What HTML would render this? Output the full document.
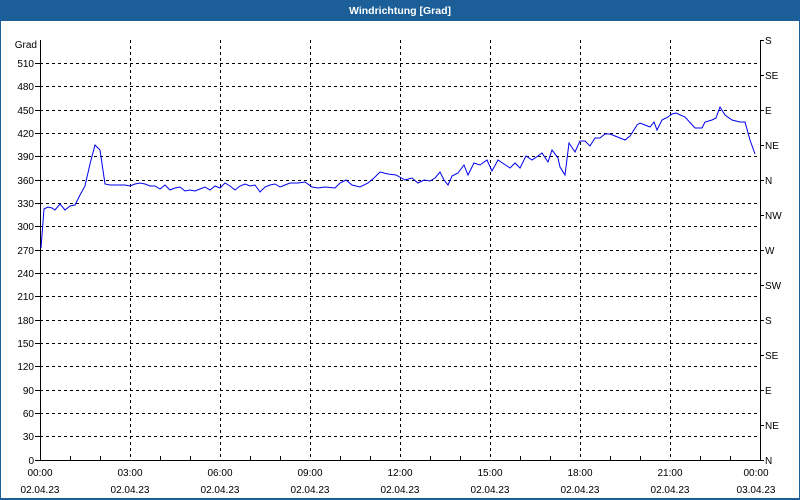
<!DOCTYPE html>
<html><head><meta charset="utf-8"><style>
html,body{margin:0;padding:0;width:800px;height:500px;overflow:hidden;background:#fff}
svg{display:block}
text{font-family:"Liberation Sans","DejaVu Sans",sans-serif;font-size:10px;fill:#000}
</style></head><body>
<svg width="800" height="500" xmlns="http://www.w3.org/2000/svg">
<rect x="0" y="0" width="800" height="500" fill="#1b5e98"/>
<rect x="1" y="21" width="798" height="477" fill="#fff"/>
<text x="400" y="14" text-anchor="middle" style="fill:#fff;font-weight:bold;font-size:10.5px">Windrichtung [Grad]</text>
<g stroke="#000" stroke-width="1" stroke-dasharray="3,3" shape-rendering="crispEdges">
<path d="M40 63.5H760M40 86.5H760M40 110.5H760M40 133.5H760M40 156.5H760M40 180.5H760M40 203.5H760M40 226.5H760M40 250.5H760M40 273.5H760M40 296.5H760M40 320.5H760M40 343.5H760M40 366.5H760M40 390.5H760M40 413.5H760M40 436.5H760"/>
<path d="M130.5 40V460M220.5 40V460M310.5 40V460M400.5 40V460M490.5 40V460M580.5 40V460M670.5 40V460"/>
</g>
<g stroke="#000" stroke-width="1" shape-rendering="crispEdges" fill="none">
<path d="M40.5 40V460.5H760.5V40"/>
<path d="M35 63.5h5M35 86.5h5M35 110.5h5M35 133.5h5M35 156.5h5M35 180.5h5M35 203.5h5M35 226.5h5M35 250.5h5M35 273.5h5M35 296.5h5M35 320.5h5M35 343.5h5M35 366.5h5M35 390.5h5M35 413.5h5M35 436.5h5M35 460.5h5"/>
<path d="M760 40.5h4M760 75.5h4M760 110.5h4M760 145.5h4M760 180.5h4M760 215.5h4M760 250.5h4M760 285.5h4M760 320.5h4M760 355.5h4M760 390.5h4M760 425.5h4M760 460.5h4"/>
<path d="M70.5 456v4M100.5 456v4M160.5 456v4M190.5 456v4M250.5 456v4M280.5 456v4M340.5 456v4M370.5 456v4M430.5 456v4M460.5 456v4M520.5 456v4M550.5 456v4M610.5 456v4M640.5 456v4M700.5 456v4M730.5 456v4"/>
</g>
<polyline fill="none" stroke="#0000ee" stroke-width="1" points="41,248 44,209 48,207 52,208 55,210 60,204 65,210 70,206 75,205 80,195 85,186 90,164 95,145 100,150 105,184 110,185 125,185 130,186 135,184 140,183 145,184 150,186 155,186 160,189 165,185 170,190 175,188 180,187 185,191 190,190 195,191 200,189 205,187 210,190 215,186 220,188 225,183 230,186 235,190 240,186 245,184 250,186 255,185 260,192 265,187 270,185 275,184 280,187 285,185 290,183 298,183 305,182 312,187 318,188 325,187 335,188 340,183 346,180 352,185 360,187 368,183 374,178 380,172 388,174 396,175 405,180 412,178 418,183 424,180 430,181 435,178 440,172 444,180 448,185 452,176 458,173 464,165 468,175 474,163 480,165 487,160 492,171 498,160 504,164 510,168 515,163 520,168 526,156 532,160 538,156 542,153 548,162 552,150 558,158 560,167 565,175 569,143 575,152 580,141 585,141 590,146 595,138 600,138 605,134 610,134 620,138 625,140 630,136 632,133 637,125 640,123 645,125 650,127 654,122 657,130 662,120 668,117 672,114 676,113 685,117 695,128 702,128 705,122 712,120 716,118 720,107 725,115 732,120 740,122 745,122 750,140 755,154"/>
<g text-anchor="end">
<text x="37" y="48">Grad</text>
<text x="34" y="67">510</text><text x="34" y="90">480</text><text x="34" y="114">450</text><text x="34" y="137">420</text><text x="34" y="160">390</text><text x="34" y="184">360</text><text x="34" y="207">330</text><text x="34" y="230">300</text><text x="34" y="254">270</text><text x="34" y="277">240</text><text x="34" y="300">210</text><text x="34" y="324">180</text><text x="34" y="347">150</text><text x="34" y="370">120</text><text x="34" y="394">90</text><text x="34" y="417">60</text><text x="34" y="440">30</text><text x="34" y="464">0</text>
</g>
<g>
<text x="765" y="44">S</text><text x="765" y="79">SE</text><text x="765" y="114">E</text><text x="765" y="149">NE</text><text x="765" y="184">N</text><text x="765" y="219">NW</text><text x="765" y="254">W</text><text x="765" y="289">SW</text><text x="765" y="324">S</text><text x="765" y="359">SE</text><text x="765" y="394">E</text><text x="765" y="429">NE</text><text x="765" y="464">N</text>
</g>
<g text-anchor="middle">
<text x="40" y="476">00:00</text><text x="130" y="476">03:00</text><text x="220" y="476">06:00</text><text x="310" y="476">09:00</text><text x="400" y="476">12:00</text><text x="490" y="476">15:00</text><text x="580" y="476">18:00</text><text x="670" y="476">21:00</text><text x="756" y="476">00:00</text>
<text x="40" y="493">02.04.23</text><text x="130" y="493">02.04.23</text><text x="220" y="493">02.04.23</text><text x="310" y="493">02.04.23</text><text x="400" y="493">02.04.23</text><text x="490" y="493">02.04.23</text><text x="580" y="493">02.04.23</text><text x="670" y="493">02.04.23</text><text x="756" y="493">03.04.23</text>
</g>
</svg>
</body></html>
